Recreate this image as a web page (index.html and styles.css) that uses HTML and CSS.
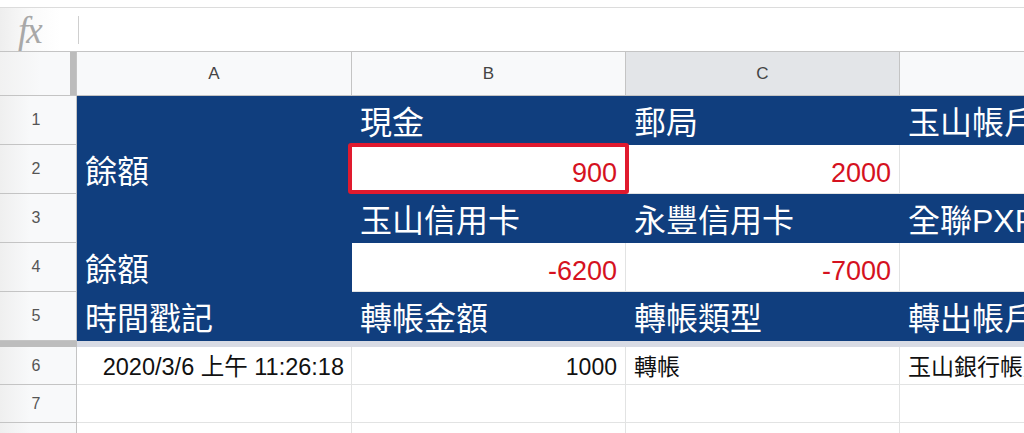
FILE: index.html
```html
<!DOCTYPE html>
<html lang="zh-Hant">
<head>
<meta charset="utf-8">
<title>Sheet</title>
<link rel="stylesheet" href="styles.css">
</head>
<body>
<div class="app">
  <div class="topgap"></div>
  <div class="formula-bar">
    <div class="fx">fx</div>
    <div class="fx-sep"></div>
    <div class="fx-input"></div>
  </div>
  <div class="grid">
    <div class="corner"></div>
    <div class="colhead">A</div>
    <div class="colhead">B</div>
    <div class="colhead sel">C</div>
    <div class="colhead">D</div>

    <div class="rowhead">1</div>
    <div class="cell navy"></div>
    <div class="cell navy">現金</div>
    <div class="cell navy">郵局</div>
    <div class="cell navy">玉山帳戶</div>

    <div class="rowhead">2</div>
    <div class="cell navy">餘額</div>
    <div class="cell white num red-box">900</div>
    <div class="cell white num">2000</div>
    <div class="cell white num"></div>

    <div class="rowhead">3</div>
    <div class="cell navy"></div>
    <div class="cell navy">玉山信用卡</div>
    <div class="cell navy">永豐信用卡</div>
    <div class="cell navy">全聯PXPay</div>

    <div class="rowhead">4</div>
    <div class="cell navy">餘額</div>
    <div class="cell white num">-6200</div>
    <div class="cell white num">-7000</div>
    <div class="cell white num"></div>

    <div class="rowhead">5</div>
    <div class="cell navy">時間戳記</div>
    <div class="cell navy">轉帳金額</div>
    <div class="cell navy">轉帳類型</div>
    <div class="cell navy">轉出帳戶</div>

    <div class="freeze"><div class="freeze-head"></div><div class="freeze-body"></div></div>

    <div class="rowhead small">6</div>
    <div class="cell data right date">2020/3/6 上午 11:26:18</div>
    <div class="cell data right">1000</div>
    <div class="cell data">轉帳</div>
    <div class="cell data">玉山銀行帳戶</div>

    <div class="rowhead small">7</div>
    <div class="cell data"></div>
    <div class="cell data"></div>
    <div class="cell data"></div>
    <div class="cell data"></div>

    <div class="rowhead small">8</div>
    <div class="cell data"></div>
    <div class="cell data"></div>
    <div class="cell data"></div>
    <div class="cell data"></div>
  </div>
</div>
</body>
</html>
```
FILE: styles.css
```css
* { box-sizing: border-box; }
html, body {
  margin: 0;
  padding: 0;
  background: #fff;
  overflow: hidden;
}
body {
  width: 1024px;
  height: 433px;
  font-family: "Liberation Sans", "Noto Sans CJK TC", sans-serif;
}
.app {
  width: 1024px;
  height: 433px;
  overflow: hidden;
}
.topgap {
  height: 8px;
  background: #fff;
  border-bottom: 1px solid #dcdcdc;
}
.formula-bar {
  height: 44px;
  display: flex;
  align-items: center;
  border-bottom: 1px solid #c4c4c4;
  background: #fff;
}
.fx {
  width: 78px;
  height: 100%;
  padding-left: 18px;
  padding-top: 2px;
  display: flex;
  align-items: center;
  font-family: "Liberation Serif", serif;
  font-style: italic;
  font-size: 37px;
  color: #a8a8a8;
  letter-spacing: -2px;
  background: linear-gradient(to right, #eeeeee 0px, #fafafa 30px, #ffffff 60px);
}
.fx-sep {
  width: 1px;
  height: 28px;
  background: #cfcfcf;
}
.fx-input { flex: 1; }

.grid {
  display: grid;
  width: 1174px;
  grid-template-columns: 77px 275px 274px 274px 274px;
  grid-template-rows: 44px 49px 49px 49px 49px 49px 6px 38px 38px 38px;
}
.corner {
  background: linear-gradient(to right, #f1f1f1 0px, #f8f9fa 40px, #f8f9fa 70px, #bcbcbc 70px, #bcbcbc 76px, #c4c4c4 76px);
  border-bottom: 1px solid #c4c4c4;
}
.colhead {
  background: #f8f9fa;
  border-right: 1px solid #c4c4c4;
  border-bottom: 1px solid #c4c4c4;
  display: flex;
  align-items: center;
  justify-content: center;
  font-size: 17px;
  color: #444;
  padding-top: 1px;
}
.colhead.sel { background: #e3e5e8; }
.rowhead {
  background: linear-gradient(to right, #efefef 0px, #f8f9fa 30px);
  border-right: 1px solid #c4c4c4;
  border-bottom: 1px solid #c4c4c4;
  display: flex;
  align-items: center;
  justify-content: center;
  font-size: 16px;
  color: #555;
  padding-right: 4px;
}
.cell {
  border-right: 1px solid #e2e3e3;
  border-bottom: 1px solid #e2e3e3;
  display: flex;
  align-items: flex-end;
  white-space: nowrap;
  overflow: hidden;
  padding: 0 8px;
}
.navy {
  background: #103e7e;
  border-color: #103e7e;
  color: #fff;
  font-size: 32px;
  line-height: 40px;
  padding-bottom: 1px;
}
.white {
  background: #fff;
}
.num {
  justify-content: flex-end;
  color: #d5121f;
  font-size: 27px;
  line-height: 34px;
  padding-bottom: 3px;
}
.red-box {
  position: relative;
  overflow: visible;
}
.red-box::after {
  content: "";
  position: absolute;
  left: -4px;
  top: -2px;
  right: -4px;
  bottom: -1px;
  border: 4px solid #e01a2e;
  border-radius: 3px;
}
.freeze {
  grid-column: 1 / -1;
  display: flex;
}
.freeze-head {
  width: 77px;
  background: #bdbdbd;
}
.freeze-body {
  flex: 1;
  background: #d8dbe4;
}
.data {
  background: #fff;
  font-size: 23px;
  line-height: 28px;
  color: #111;
  padding-bottom: 3px;
}
.data.date {
  font-size: 23.5px;
  padding-right: 7px;
}
.right { justify-content: flex-end; }
```
